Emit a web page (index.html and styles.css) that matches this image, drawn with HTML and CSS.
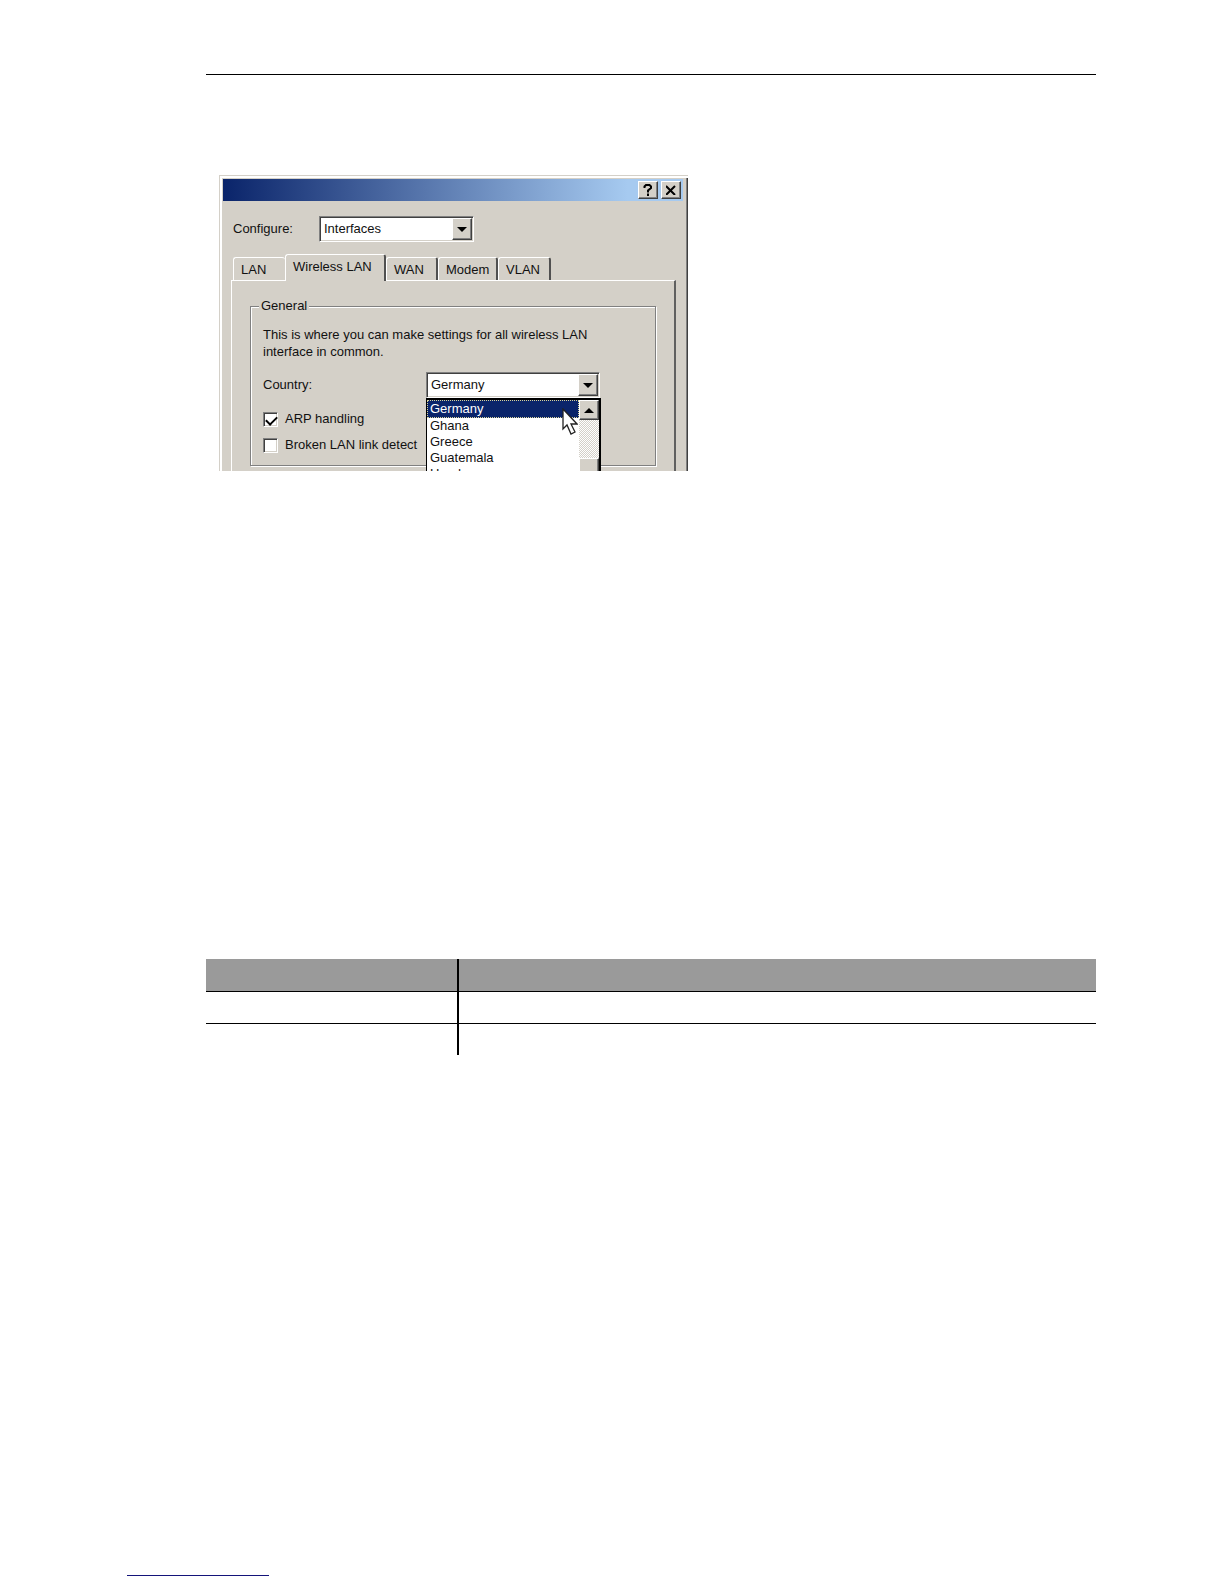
FILE: index.html
```
<!DOCTYPE html>
<html lang="en">
<head>
    <meta charset="UTF-8">
    <meta name="viewport" content="width=device-width, initial-scale=1.0">
    <title>Wireless LAN settings</title>
    <link rel="stylesheet" href="styles.css">
</head>

<body>
    <main>
        <hr>

        <figure class="dialog">
            <header class="titlebar">
                <button type="button" aria-label="Help">
                    <svg width="10" height="12" viewBox="0 0 10 12"><path d="M1.5 4V2.5L3 1H6.5L8 2.5V4L5 6.5V8.5M5 9.5V12" fill="none" stroke="#000" stroke-width="2"/></svg>
                </button>
                <button type="button" aria-label="Close">
                    <svg width="10" height="10" viewBox="0 0 10 10"><path d="M0 1L9 10M9 1L0 10" fill="none" stroke="#000" stroke-width="2"/></svg>
                </button>
            </header>

            <div class="configure">
                <label for="configure">Configure:</label>
                <div class="combo">
                    <select id="configure"><option>Interfaces</option></select>
                    <span class="arrow"><svg width="10" height="5" viewBox="0 0 10 5"><path d="M0 0H10L5 5Z"/></svg></span>
                </div>
            </div>

            <nav class="tabs">
                <button type="button" class="lan">LAN</button>
                <button type="button" class="wireless active">Wireless LAN</button>
                <button type="button" class="wan">WAN</button>
                <button type="button" class="modem">Modem</button>
                <button type="button" class="vlan">VLAN</button>
            </nav>

            <div class="panel">
                <fieldset>
                    <legend>General</legend>
                    <p>This is where you can make settings for all wireless LAN<br>interface in common.</p>

                    <div class="country">
                        <label for="country">Country:</label>
                        <div class="combo">
                            <select id="country"><option>Germany</option></select>
                            <span class="arrow"><svg width="10" height="5" viewBox="0 0 10 5"><path d="M0 0H10L5 5Z"/></svg></span>

                            <div class="dropdown">
                                <ul role="listbox" aria-label="Country">
                                    <li role="option" aria-selected="true">Germany</li>
                                    <li role="option">Ghana</li>
                                    <li role="option">Greece</li>
                                    <li role="option">Guatemala</li>
                                    <li role="option">Honduras</li>
                                </ul>
                                <div class="scrollbar">
                                    <span class="up"><svg width="10" height="5" viewBox="0 0 10 5"><path d="M0 5H10L5 0Z"/></svg></span>
                                    <span class="thumb"></span>
                                </div>
                                <svg class="pointer" width="16" height="28" viewBox="0 0 16 28"><path d="M1 1V21L5 17L9 26L13 24L9 16H15Z" fill="#fff" stroke="#222" stroke-width="1.3"/></svg>
                            </div>
                        </div>
                    </div>

                    <div class="check"><input type="checkbox" id="arp" checked><label for="arp">ARP handling</label></div>
                    <div class="check"><input type="checkbox" id="link"><label for="link">Broken LAN link detect</label></div>
                </fieldset>
            </div>
        </figure>

        <table>
            <thead>
                <tr><th></th><th></th></tr>
            </thead>
            <tbody>
                <tr><td></td><td></td></tr>
                <tr><td></td><td></td></tr>
            </tbody>
        </table>
    </main>

    <footer><a href="#" aria-label="Home"></a></footer>
</body>
</html>
```
FILE: styles.css
```
*           { box-sizing: border-box; }
body        { margin: 0; background-color: #fff; color: #111; font: 13px/18px "Liberation Sans", Arial, sans-serif; }
main        { margin: 0 128px 0 206px; padding-top: 74px; }
hr          { margin: 0; border: 0; height: 1px; background-color: #000; }
button, select { font: inherit; color: inherit; border-radius: 0; margin: 0; }

/* dialog window, cut off at the lower edge */
.dialog     { position: relative; margin: 100px 0 0 13px; width: 469px; height: 296px; overflow: hidden; background-color: #d4d0c8;
              border: solid #d4d0c8; border-width: 1px 0 0 1px; padding: 3px 5px 0 3px;
              box-shadow: inset 2px 2px #fff, inset -1px 0 #404040, inset -2px 0 #808080; }
.titlebar   { display: flex; justify-content: flex-end; align-items: center; gap: 3px; height: 22px; padding-right: 2px;
              background: linear-gradient(to right, #0a246a, #a6caf0 88%); }
.titlebar button, .arrow, .up, .thumb { display: flex; align-items: center; justify-content: center; background-color: #d4d0c8; padding: 0;
              border: 1px solid; border-color: #fff #404040 #404040 #fff; box-shadow: inset -1px -1px #808080; }
.titlebar button { width: 20px; height: 18px; }

.configure  { display: flex; align-items: center; margin: 15px 0 0 10px; }
.configure label { width: 86px; }
.configure .combo { width: 155px; }

.combo      { position: relative; height: 26px; background-color: #fff;
              border: 1px solid; border-color: #808080 #fff #fff #808080; box-shadow: inset 1px 1px #404040, inset -1px -1px #d4d0c8; }
.combo select { appearance: none; width: 100%; height: 24px; border: 0; padding: 0 22px 0 4px; background: transparent; outline: 0; }
.arrow      { position: absolute; top: 1px; right: 1px; width: 20px; height: 22px; pointer-events: none; }

.tabs       { display: flex; align-items: flex-end; height: 26px; margin: 12px 0 0 10px; }
.tabs button { height: 23px; padding: 2px 0 0 7px; text-align: left; background-color: #d4d0c8; border: solid; border-width: 1px 2px 0 1px;
              border-color: #fff #505050 #fff #fff; border-radius: 3px 3px 0 0; }
.tabs .active { position: relative; height: 27px; margin-bottom: -1px; padding-bottom: 4px; }
.tabs .lan  { width: 52px; border-right-width: 0; }
.tabs .wireless { width: 101px; }
.tabs .wan  { width: 52px; }
.tabs .modem { width: 60px; }
.tabs .vlan { width: 53px; }

.panel      { margin: 0 7px 0 8px; height: 220px; padding: 16px 18px 0; border: solid; border-width: 1px 2px 0 1px; border-color: #fff #606060 #fff #fff; }
fieldset    { margin: 0; height: 169px; padding: 11px 12px 0; border: 1px solid #808080; box-shadow: 1px 1px #fff, inset 1px 1px #fff; min-width: 0; }
legend      { padding: 0 2px; margin-left: -4px; background-color: #d4d0c8; }
p           { margin: 0; line-height: 17px; white-space: nowrap; }

.country    { display: flex; align-items: center; margin: 12px 0; }
.country label { width: 163px; }
.country .combo { width: 174px; }

.dropdown   { position: absolute; z-index: 1; top: 25px; left: -1px; width: 175px; height: 90px; display: flex; background-color: #fff; border: solid #000; border-width: 2px 2px 0 1px; }
.dropdown ul { flex: 1; margin: 0; padding: 0; list-style: none; line-height: 16px; }
.dropdown li { padding-left: 3px; }
.dropdown li[aria-selected] { line-height: 18px; background-color: #0a246a; color: #fff; outline: 1px dotted #d8d39a; outline-offset: -1px; }
.scrollbar  { width: 20px; background: repeating-conic-gradient(#fff 0 25%, #d4d0c8 0 50%) 0 0 / 2px 2px; }
.up         { height: 20px; }
.thumb      { height: 30px; margin-top: 38px; }
.pointer    { position: absolute; left: 135px; top: 8px; }

.check      { display: flex; align-items: center; gap: 7px; height: 18px; margin-bottom: 8px; white-space: nowrap; }
.check input { appearance: none; margin: 0; width: 15px; height: 15px; background-color: #fff;
              border: 1px solid; border-color: #808080 #fff #fff #808080; box-shadow: inset 1px 1px #404040, inset -1px -1px #d4d0c8; }
.check input:checked::before { content: ""; display: block; width: 9px; height: 5px; margin: 3px 0 0 2px;
              border: solid #000; border-width: 0 0 2px 2px; transform: rotate(-45deg); }

table       { width: 100%; margin-top: 488px; border-collapse: collapse; table-layout: fixed; }
th, td      { height: 32px; padding: 0; }
th          { background-color: #9a9a9a; }
td          { border-top: 1px solid #000; }
th:first-child, td:first-child { width: 252px; border-right: 2px solid #000; }

footer      { margin: 520px 0 0 127px; }
footer a    { display: block; width: 142px; height: 1px; background-color: #14147a; }
```
